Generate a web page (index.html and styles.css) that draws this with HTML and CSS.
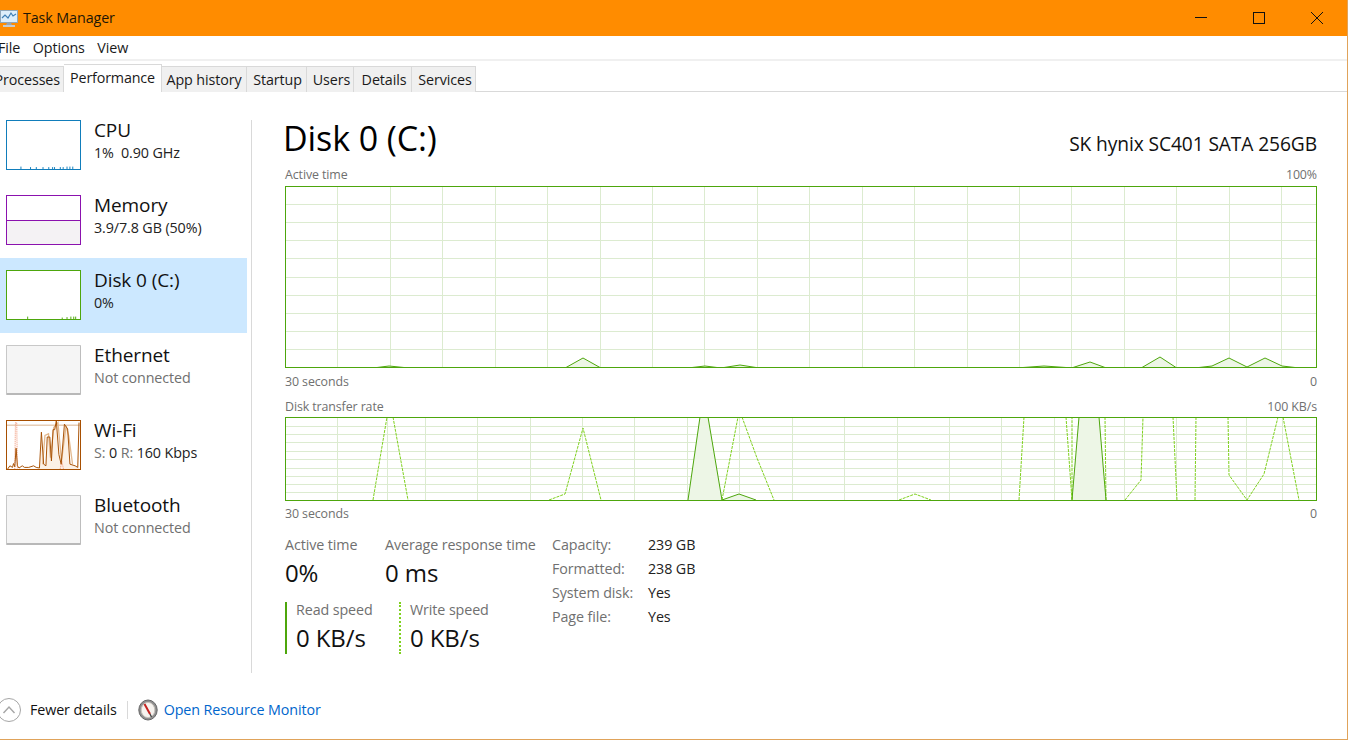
FILE: index.html
```html
<!DOCTYPE html>
<html lang="en">
<head>
  <meta charset="UTF-8">
  <title>Task Manager</title>
  <link rel="stylesheet" href="styles.css">
</head>
<body>
  <div class="window">
    <div class="titlebar">
      <svg class="app-icon" width="18" height="17" viewBox="0 0 18 17">
        <rect x="0.5" y="0.5" width="17" height="12" fill="#dceefa" stroke="#8fa6b8"/>
        <path d="M2 8 L5 5 L8 8 L11 3 L13 6 L16 4" fill="none" stroke="#3f7fb5" stroke-width="1.2"/>
        <path d="M7 13 H11 L12 15 H6 Z" fill="#9aa4ac"/>
        <rect x="3" y="15" width="12" height="2" fill="#c4cbd0"/>
      </svg>
      <span class="app-title">Task Manager</span>
      <div class="win-buttons">
        <svg width="12" height="12" viewBox="0 0 12 12"><path d="M0 5.5 H12" stroke="#111" fill="none"/></svg>
        <svg width="12" height="12" viewBox="0 0 12 12"><rect x="0.5" y="0.5" width="11" height="11" stroke="#111" fill="none"/></svg>
        <svg width="12" height="12" viewBox="0 0 12 12"><path d="M0 0 L12 12 M12 0 L0 12" stroke="#111" fill="none"/></svg>
      </div>
    </div>

    <div class="menubar">
      <span>File</span>
      <span>Options</span>
      <span>View</span>
    </div>

    <div class="tabs">
      <div class="tab tab-processes">Processes</div>
      <div class="tab active tab-performance">Performance</div>
      <div class="tab tab-app">App history</div>
      <div class="tab tab-startup">Startup</div>
      <div class="tab tab-users">Users</div>
      <div class="tab tab-details">Details</div>
      <div class="tab tab-services">Services</div>
    </div>

    <div class="content">
      <div class="sidebar">
        <div class="item">
          <svg class="thumb thumb-cpu" viewBox="0 0 75 50">
            <path d="M14 50 V47.5 M24 50 V48 M30 50 V48 M37 50 V48 M43 50 V48 M47 50 V48 M49 50 V48 M55 50 V48 M58 50 V48 M62 50 V47.5 M65 50 V47.5 M68 50 V47.5" stroke="#117dbb" fill="none"/>
          </svg>
          <div class="item-text">
            <div class="item-name">CPU</div>
            <div class="item-sub">1%&nbsp; 0.90 GHz</div>
          </div>
        </div>
        <div class="item">
          <div class="thumb thumb-memory"><div class="memory-used"></div></div>
          <div class="item-text">
            <div class="item-name">Memory</div>
            <div class="item-sub">3.9/7.8 GB (50%)</div>
          </div>
        </div>
        <div class="item selected">
          <svg class="thumb thumb-disk" viewBox="0 0 75 50">
            <path d="M21 50 V47.5 M57 50 V48.5 M62 50 V48 M66 50 V47.5 M69 50 V47.5 M71 50 V47.5" stroke="#4da60c" fill="none"/>
          </svg>
          <div class="item-text">
            <div class="item-name">Disk 0 (C:)</div>
            <div class="item-sub">0%</div>
          </div>
        </div>
        <div class="item">
          <div class="thumb thumb-off"></div>
          <div class="item-text">
            <div class="item-name">Ethernet</div>
            <div class="item-sub muted">Not connected</div>
          </div>
        </div>
        <div class="item">
          <svg class="thumb thumb-wifi" viewBox="18 15 225 150" preserveAspectRatio="none">
            <path d="M18 28 H242" stroke="#d9b08c" stroke-width="3" fill="none"/>
            <path d="M118 165 L124 50 L131 150 L138 155 L142 65 L150 65 L155 140 L160 42 L165 42 L170 15 L178 120 L185 150 L195 25 L205 40 L212 150 L228 155 L236 160 L240 20 V165 Z" fill="#fcf1e6"/>
            <path d="M42 165 L44 20 L48 20 L50 165 M182 165 L187 140 L192 165" stroke="#f4a78c" stroke-width="3" stroke-dasharray="4 2" fill="none"/>
            <path d="M128 150 L135 60 L146 55 L152 130 L162 35 L175 20 L186 140 L200 30 L208 60 L220 150" stroke="#e3b98f" stroke-width="4" fill="none"/>
            <path d="M20 165 L27 155 L35 160 L38 148 L42 158 L46 100 L50 155 L55 162 L65 155 L72 160 L85 160 L100 155 L108 160 L118 162 L124 50 L131 150 L138 155 L142 65 L150 65 L155 140 L160 42 L165 42 L170 15 L178 120 L185 150 L195 25 L205 40 L212 150 L228 155 L236 160 L240 20" stroke="#a74f01" stroke-width="3" fill="none"/>
          </svg>
          <div class="item-text">
            <div class="item-name">Wi-Fi</div>
            <div class="item-sub"><span class="muted">S:</span> 0 <span class="muted">R:</span> 160 Kbps</div>
          </div>
        </div>
        <div class="item">
          <div class="thumb thumb-off"></div>
          <div class="item-text">
            <div class="item-name">Bluetooth</div>
            <div class="item-sub muted">Not connected</div>
          </div>
        </div>
      </div>

      <div class="main">
        <div class="heading">
          <div class="heading-title">Disk 0 (C:)</div>
          <div class="heading-model">SK hynix SC401 SATA 256GB</div>
        </div>

        <div class="chart-label"><span>Active time</span><span>100%</span></div>
        <svg class="chart chart-active" viewBox="285 186 1033 183">
          <path class="grid" d="M337.5 186V368 M390.5 186V368 M442.5 186V368 M495.5 186V368 M547.5 186V368 M600.5 186V368 M652.5 186V368 M704.5 186V368 M757.5 186V368 M809.5 186V368 M862.5 186V368 M914.5 186V368 M967.5 186V368 M1019.5 186V368 M1071.5 186V368 M1124.5 186V368 M1176.5 186V368 M1229.5 186V368 M1281.5 186V368
            M285 204.5H1317 M285 222.5H1317 M285 240.5H1317 M285 258.5H1317 M285 277.5H1317 M285 295.5H1317 M285 313.5H1317 M285 331.5H1317 M285 349.5H1317"/>
          <path class="read-area" d="M377 367.5 L389 366 L404 367.5 Z M566 367.5 L583 358 L600 367.5 Z M692 367.5 L705 366 L717 367.5 Z M724 367.5 L740 365 L756 367.5 Z M1023 367.5 L1044 366 L1066 367.5 Z M1073 367.5 L1090 362 L1105 367.5 Z M1142 367.5 L1160 357 L1176 367.5 Z M1199 367.5 L1212 366 L1229 358 L1247 367 L1265 358 L1282 366 L1295 367.5 Z"/>
          <path class="read-line" d="M377 367.5 L389 366 L404 367.5 M566 367.5 L583 358 L600 367.5 M692 367.5 L705 366 L717 367.5 M724 367.5 L740 365 L756 367.5 M1023 367.5 L1044 366 L1066 367.5 M1073 367.5 L1090 362 L1105 367.5 M1142 367.5 L1160 357 L1176 367.5 M1199 367.5 L1212 366 L1229 358 L1247 367 L1265 358 L1282 366 L1295 367.5"/>
          <rect class="frame" x="285.5" y="186.5" width="1031" height="181"/>
        </svg>
        <div class="chart-foot"><span>30 seconds</span><span>0</span></div>

        <div class="chart-label second"><span>Disk transfer rate</span><span>100 KB/s</span></div>
        <svg class="chart chart-rate" viewBox="285 417 1033 84">
          <path class="grid" d="M337.5 417V500 M387.5 417V500 M425.5 417V500 M477.5 417V500 M530.5 417V500 M582.5 417V500 M634.5 417V500 M687.5 417V500 M739.5 417V500 M792.5 417V500 M844.5 417V500 M897.5 417V500 M949.5 417V500 M1001.5 417V500 M1054.5 417V500 M1124.5 417V500 M1176.5 417V500 M1246.5 417V500 M1282.5 417V500
            M285 426.5H1317 M285 434.5H1317 M285 442.5H1317 M285 451.5H1317 M285 459.5H1317 M285 468.5H1317 M285 476.5H1317 M285 484.5H1317 M285 492.5H1317"/>
          <path class="read-area" d="M688 500 L700 417 L708 417 L722 500 L739 494 L756 500 Z M1072 500 L1079 417 L1099 417 L1106 500 Z"/>
          <path class="write-line" d="M373 500 L387 417 M393 417 L408 500 M549 500 L565 494 L583 428 L601 500 M722 500 L738 417 M742 417 L757 458 L774 500 M899 500 L915 494 L931 500 M1019 500 L1024 417 M1066 417 L1072 500 L1072 417 M1105 417 L1106 500 M1125 500 L1141 480 L1143 417 M1173 417 L1177 500 M1196 417 L1195 500 M1228 417 L1229 475 L1247 500 L1264 474 L1278 417 M1283 417 L1299 500"/>
          <path class="read-line" d="M688 500 L700 417 M708 417 L722 500 L739 494 L756 500 M1072 500 L1079 417 M1099 417 L1106 500"/>
          <rect class="frame" x="285.5" y="417.5" width="1031" height="83"/>
        </svg>
        <div class="chart-foot"><span>30 seconds</span><span>0</span></div>

        <div class="stats">
          <div class="stats-left">
            <div class="stats-row">
              <div class="stat stat-active">
                <div class="stat-label">Active time</div>
                <div class="stat-value">0%</div>
              </div>
              <div class="stat">
                <div class="stat-label">Average response time</div>
                <div class="stat-value">0 ms</div>
              </div>
            </div>
            <div class="stats-row speed-row">
              <div class="stat speed speed-read">
                <div class="stat-label">Read speed</div>
                <div class="stat-value">0 KB/s</div>
              </div>
              <div class="stat speed speed-write">
                <div class="stat-label">Write speed</div>
                <div class="stat-value">0 KB/s</div>
              </div>
            </div>
          </div>
          <div class="props">
            <div class="prop-key">Capacity:</div><div>239 GB</div>
            <div class="prop-key">Formatted:</div><div>238 GB</div>
            <div class="prop-key">System disk:</div><div>Yes</div>
            <div class="prop-key">Page file:</div><div>Yes</div>
          </div>
        </div>
      </div>
    </div>

    <div class="footer">
      <svg class="fewer-icon" width="26" height="26" viewBox="0 0 26 26">
        <circle cx="12" cy="13" r="11.5" fill="#fff" stroke="#a6a6a6"/>
        <path d="M6.5 16 L12 10 L17.5 16" fill="none" stroke="#a6a6a6" stroke-width="1.4"/>
      </svg>
      <span class="fewer">Fewer details</span>
      <span class="foot-sep"></span>
      <svg class="monitor-icon" width="20" height="22" viewBox="0 0 20 22">
        <ellipse cx="10" cy="11" rx="9.2" ry="10" fill="#8f8f8f" stroke="#666"/>
        <ellipse cx="10" cy="11" rx="6.8" ry="7.6" fill="#f6f3ef" stroke="#c9c4bd"/>
        <path d="M6.5 5 L12 15" stroke="#c5221f" stroke-width="2"/>
        <path d="M12 15 L13.5 18" stroke="#444" stroke-width="1.4"/>
      </svg>
      <span class="monitor-link">Open Resource Monitor</span>
    </div>
  </div>
</body>
</html>
```

FILE: styles.css
```css
* { box-sizing: border-box; }
html, body { margin: 0; height: 100%; overflow: hidden; background: #fff; }
body { font-family: "Open Sans", "Noto Sans", sans-serif; font-size: 14.3px; color: #1a1a1a; letter-spacing: -0.1px; }

.window { width: 1348px; height: 740px; display: flex; flex-direction: column; background: #fff; border-right: 1px solid #e0a35a; border-bottom: 1px solid #e0a35a; }

.titlebar { height: 36px; flex: none; background: #ff8c00; display: flex; align-items: center; }
.app-icon { flex: none; }
.app-title { margin-left: 5px; margin-top: -1px; color: #1d1605; }
.win-buttons { margin-left: auto; margin-right: 24px; display: flex; gap: 46px; }
.win-buttons svg { display: block; }

.menubar { height: 25px; flex: none; display: flex; gap: 12.5px; align-items: center; margin-left: -2px; border-bottom: 2px solid #f0f0f0; }

.tabs { height: 31px; flex: none; display: flex; align-items: flex-end; border-bottom: 1px solid #d9d9d9; }
.tab { height: 26px; background: #f0f0f0; border: 1px solid #d9d9d9; border-left: none; border-bottom: none; display: flex; align-items: center; justify-content: center; white-space: nowrap; margin-bottom: -1px; }
.tab.active { height: 28px; background: #fff; padding-bottom: 2px; position: relative; }
.tab-processes { width: 64px; justify-content: flex-end; padding-right: 3px; }
.tab-performance { width: 98px; letter-spacing: -0.15px; }
.tab-app { width: 85px; }
.tab-startup { width: 60px; padding-left: 2px; }
.tab-users { width: 47px; padding-left: 3px; }
.tab-details { width: 58px; padding-left: 3px; }
.tab-services { width: 64px; padding-left: 3px; }

.content { flex: 1; display: flex; min-height: 0; }
.sidebar { width: 247px; flex: none; padding-top: 16px; }
.item { height: 75px; display: flex; align-items: flex-start; padding: 12px 0 0 6px; }
.item.selected { background: #cce8ff; }
.thumb { width: 75px; height: 50px; flex: none; display: block; background: #fff; border: 1px solid #bbb; overflow: hidden; }
.thumb-cpu { border-color: #117dbb; }
.thumb-memory { border-color: #8b12ae; display: flex; align-items: flex-end; }
.memory-used { width: 100%; height: 24px; background: #f4f2f4; border-top: 1px solid #8b12ae; }
.thumb-disk { border-color: #4da60c; }
.thumb-wifi { border-color: #a74f01; }
.thumb-off { background: #f5f5f5; border-color: #c8c8c8; border-bottom: 2px solid #b8b8b8; border-right-color: #bdbdbd; border-radius: 1px; }
.item-text { margin-left: 13px; margin-top: -2px; }
.item-name { font-size: 19px; line-height: 24px; color: #111; }
.item-sub { line-height: 21px; color: #222; white-space: nowrap; }
.muted { color: #707070; }

.main { flex: 1; margin: 28px 0 7px 4px; padding: 0 30px 0 33px; border-left: 1px solid #d9d9d9; min-width: 0; }
.heading { height: 36px; display: flex; justify-content: space-between; align-items: center; margin-left: -2px; }
.heading-title { font-size: 34px; line-height: 36px; color: #000; }
.heading-model { font-size: 19.2px; color: #111; margin-top: 10px; }

.chart-label, .chart-foot { display: flex; justify-content: space-between; font-size: 12.4px; line-height: 16px; color: #707070; }
.chart-label { margin: 11px 0 3px; }
.chart-label.second { margin: 9px 0 2px; }
.chart-foot { margin-top: 5px; }
.chart { display: block; width: 1033px; }
.chart-active { height: 183px; }
.chart-rate { height: 84px; }
.grid { stroke: #dcebd0; fill: none; shape-rendering: crispEdges; }
.frame { fill: none; stroke: #4da60c; shape-rendering: crispEdges; }
.read-area { fill: #edf6e6; }
.read-line { fill: none; stroke: #4da60c; }
.write-line { fill: none; stroke: #7fd11f; stroke-dasharray: 3 1; }

.stats { display: flex; margin-top: 15px; }
.stats-left { width: 267px; flex: none; }
.stats-row { display: flex; }
.speed-row { margin-top: 13px; }
.stat-label { line-height: 16px; color: #707070; white-space: nowrap; }
.stat-value { font-size: 24px; line-height: 32px; margin-top: 4px; color: #111; white-space: nowrap; }
.stat-active { width: 100px; }
.speed { height: 52px; padding-left: 9px; }
.speed .stat-value { margin-top: 4px; }
.speed-read { width: 114px; border-left: 2px solid #4da60c; }
.speed-write { border-left: 2px dotted #7fd11f; }
.props { display: grid; grid-template-columns: 96px auto; grid-auto-rows: 24px; align-items: center; height: 96px; margin-top: -4px; line-height: 24px; color: #222; }
.prop-key { color: #707070; }

.footer { height: 59px; flex: none; display: flex; align-items: center; }
.fewer-icon { margin-left: -3px; flex: none; }
.fewer { margin-left: 7px; color: #111; }
.foot-sep { width: 1px; height: 18px; background: #d9d9d9; margin-left: 10px; }
.monitor-icon { margin-left: 10px; flex: none; }
.monitor-link { margin-left: 6px; color: #0066cc; }
```
